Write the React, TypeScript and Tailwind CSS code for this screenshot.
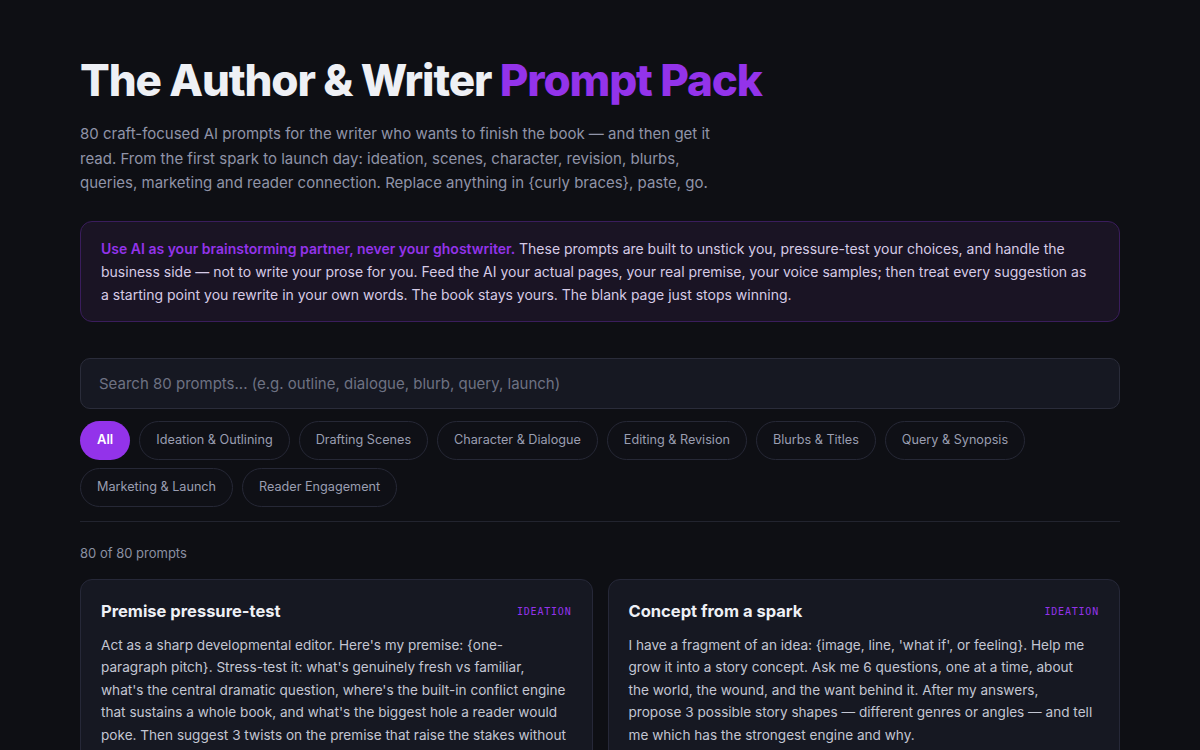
import { useState } from "react";

const categories = [
  "All",
  "Ideation & Outlining",
  "Drafting Scenes",
  "Character & Dialogue",
  "Editing & Revision",
  "Blurbs & Titles",
  "Query & Synopsis",
  "Marketing & Launch",
  "Reader Engagement",
];

const prompts = [
  {
    title: "Premise pressure-test",
    tag: "Ideation",
    body: "Act as a sharp developmental editor. Here's my premise: {one-paragraph pitch}. Stress-test it: what's genuinely fresh vs familiar, what's the central dramatic question, where's the built-in conflict engine that sustains a whole book, and what's the biggest hole a reader would poke. Then suggest 3 twists on the premise that raise the stakes without losing what makes it mine.",
  },
  {
    title: "Concept from a spark",
    tag: "Ideation",
    body: "I have a fragment of an idea: {image, line, 'what if', or feeling}. Help me grow it into a story concept. Ask me 6 questions, one at a time, about the world, the wound, and the want behind it. After my answers, propose 3 possible story shapes — different genres or angles — and tell me which has the strongest engine and why.",
  },
  {
    title: "Three-act skeleton",
    tag: "Ideation",
    body: "Using my premise {premise} and protagonist {name + core wound}, build a three-act skeleton: inciting incident, first plot point, midpoint reversal, dark moment, climax and resolution. One or two sentences each, and flag any beat that feels soft.",
  },
  {
    title: "Scene goal check",
    tag: "Drafting",
    body: "Here is a scene I drafted: {scene}. Identify the POV character's goal, the obstacle, and the outcome. If any are missing or muddy, tell me where and suggest two ways to sharpen it — without rewriting my prose.",
  },
];

const App = () => {
  const [active, setActive] = useState("All");
  const [query, setQuery] = useState("");

  return (
    <main
      className="min-h-screen bg-[#0e0f14] text-[#e5e7eb]"
      style={{ fontFamily: "Inter, 'Noto Sans', sans-serif" }}
    >
      <div className="mx-auto w-[1040px] pt-[52px] pb-16">
        <h1 className="text-[44px] leading-[56px] font-extrabold tracking-[-0.026em] text-[#eef0f5]">
          The Author &amp; Writer{" "}
          <span className="text-[#9333ea]">Prompt Pack</span>
        </h1>

        <p className="mt-[14px] max-w-[640px] text-[15px] leading-[24.5px] text-[#9094a8]">
          80 craft-focused AI prompts for the writer who wants to finish the
          book — and then get it read. From the first spark to launch day:
          ideation, scenes, character, revision, blurbs, queries, marketing and
          reader connection. Replace anything in {"{curly braces}"}, paste, go.
        </p>

        <div className="mt-[25px] rounded-xl border border-[#3a1d5c] bg-[#1a1424] pl-5 pr-6 py-[15px] text-[14px] leading-[23px] text-[#d6cbe6]">
          <span className="font-semibold text-[#9333ea]">
            Use AI as your brainstorming partner, never your ghostwriter.
          </span>{" "}
          These prompts are built to unstick you, pressure-test your choices,
          and handle the business side — not to write your prose for you. Feed
          the AI your actual pages, your real premise, your voice samples; then
          treat every suggestion as a starting point you rewrite in your own
          words. The book stays yours. The blank page just stops winning.
        </div>

        <input
          value={query}
          onChange={(e) => setQuery(e.target.value)}
          placeholder="Search 80 prompts... (e.g. outline, dialogue, blurb, query, launch)"
          className="mt-[36px] h-[51px] w-full rounded-[10px] border border-[#2a2c3a] bg-[#161822] px-[18px] text-[15px] text-[#e5e7eb] placeholder-[#6e7283] outline-none"
        />

        <div className="mt-3 flex flex-wrap gap-x-[9px] gap-y-[8px]">
          {categories.map((c) => (
            <button
              key={c}
              onClick={() => setActive(c)}
              className={
                c === active
                  ? "h-[39px] rounded-full bg-[#9333ea] px-[17px] text-[13px] font-semibold text-white"
                  : "h-[39px] rounded-full border border-[#262836] bg-[#0f1016] px-4 text-[12.65px] text-[#9a9eb1]"
              }
            >
              {c}
            </button>
          ))}
        </div>

        <div className="mt-[14px] border-t border-[#22242f]" />

        <p className="mt-[22px] text-[13px] text-[#8b8fa1]">80 of 80 prompts</p>

        <div className="mt-[16px] grid grid-cols-2 gap-[15px]">
          {prompts.map((p) => (
            <div
              key={p.title}
              className="rounded-xl border border-[#262838] bg-[#161822] pl-5 pr-6 pt-[19px] pb-5"
            >
              <div className="-mr-1 flex items-center justify-between">
                <h3 className="text-[16.5px] font-bold text-[#eef0f5]">
                  {p.title}
                </h3>
                <span
                  className="text-[10px] uppercase tracking-[0.08em] text-[#9333ea]"
                  style={{ fontFamily: "'DejaVu Sans Mono', monospace" }}
                >
                  {p.tag}
                </span>
              </div>
              <p className="mt-[10px] text-[13.6px] leading-[22.5px] text-[#c3c6d3]">
                {p.body}
              </p>
            </div>
          ))}
        </div>
      </div>
    </main>
  );
};

export default App;
